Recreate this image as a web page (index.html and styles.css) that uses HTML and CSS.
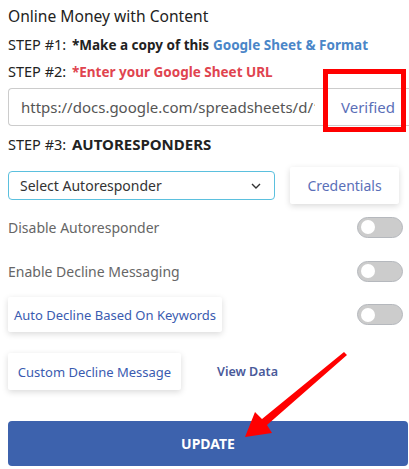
FILE: index.html
```html
<!DOCTYPE html>
<html lang="en">
<head>
    <meta charset="UTF-8">
    <title>Autoresponder Settings</title>
    <link rel="stylesheet" href="styles.css">
</head>
<body>
    <div class="panel">
        <h3 class="title">Online Money with Content</h3>

        <div class="step">STEP #1: <b>*Make a copy of this</b> <a class="sheet-link" href="#">Google Sheet &amp; Format</a></div>
        <div class="step">STEP #2: <b class="warn">*Enter your Google Sheet URL</b></div>

        <div class="url-group">
            <input type="text" class="url-input" value="https://docs.google.com/spreadsheets/d/1AbCdEfGh">
            <span class="addon">Verified</span>
        </div>

        <div class="step step3">STEP #3: <b>AUTORESPONDERS</b></div>

        <div class="row select-row">
            <div class="select">
                <span>Select Autoresponder</span>
                <svg class="chevron" width="10" height="6" viewBox="0 0 10 6"><path d="M1 1l4 4 4-4" fill="none" stroke="#333" stroke-width="1.4"/></svg>
            </div>
            <button class="card-btn cred">Credentials</button>
        </div>

        <div class="row toggle-row">
            <span class="label">Disable Autoresponder</span>
            <span class="switch"><span class="knob"></span></span>
        </div>
        <div class="row toggle-row">
            <span class="label">Enable Decline Messaging</span>
            <span class="switch"><span class="knob"></span></span>
        </div>
        <div class="row toggle-row kw-row">
            <button class="card-btn kw">Auto Decline Based On Keywords</button>
            <span class="switch"><span class="knob"></span></span>
        </div>

        <div class="row custom-row">
            <button class="card-btn custom">Custom Decline Message</button>
            <a class="view-data" href="#">View Data</a>
        </div>

        <button class="update">UPDATE</button>
    </div>

    <!-- annotation overlay -->
    <svg class="marks" width="409" height="469" viewBox="0 0 409 469">
        <rect x="325.5" y="71.5" width="78" height="58" fill="none" stroke="#ff0000" stroke-width="5"/>
        <polygon points="344,352 347,355 267,425 272,433 245,437 255,412 262,419" fill="#ff0000"/>
    </svg>
</body>
</html>
```

FILE: styles.css
```css
body {
    margin: 0;
    font-family: "Noto Sans", "Open Sans", sans-serif;
    background-color: #ffffff;
    color: #222222;
    width: 409px;
    height: 469px;
    overflow: hidden;
    position: relative;
}
.panel {
    padding: 0 0 0 8px;
}
.title {
    font-size: 15.6px;
    font-weight: normal;
    line-height: 20px;
    margin: 6px 0 8px 0;
    color: #222;
}
.step {
    font-size: 14.5px;
    line-height: 20px;
    margin-bottom: 6px;
    color: #222;
}
.step b {
    font-size: 13.5px;
    margin-left: 2px;
}
.sheet-link {
    color: #4a86c8;
    font-weight: bold;
    font-size: 13.5px;
    text-decoration: none;
}
.warn {
    color: #e0444f;
}
.url-group {
    display: flex;
    height: 38px;
    margin-top: 0;
    width: 420px;
}
.url-input {
    flex: 0 0 319px;
    box-sizing: border-box;
    border: 1px solid #cccccc;
    border-right: none;
    border-radius: 4px 0 0 4px;
    padding: 0 12px;
    font-family: inherit;
    font-size: 15px;
    color: #555;
    height: 38px;
}
.addon {
    flex: 1;
    border: 1px solid #cccccc;
    border-left: 1px solid #e8e8e8;
    display: flex;
    align-items: center;
    padding-left: 13px;
    font-size: 15px;
    color: #5a6fb8;
    box-sizing: border-box;
}
.step3 {
    margin-top: 8px;
}
.step3 b {
    font-size: 15px;
}
.row {
    display: flex;
    align-items: center;
}
.select-row {
    margin-top: 13px;
    height: 37px;
}
.select {
    width: 267px;
    height: 29px;
    box-sizing: border-box;
    border: 1px solid #5bc0de;
    border-radius: 4px;
    display: flex;
    align-items: center;
    justify-content: space-between;
    padding: 0 13px 0 11px;
    font-size: 14px;
    color: #333;
}
.card-btn {
    background: #ffffff;
    border: none;
    border-radius: 2px;
    box-shadow: 0 2px 6px rgba(0, 0, 0, 0.15);
    font-family: inherit;
    white-space: nowrap;
    padding: 0;
    cursor: pointer;
}
.cred {
    margin-left: 15px;
    width: 109px;
    height: 37px;
    font-size: 14px;
    color: #5a6fb8;
}
.toggle-row {
    justify-content: space-between;
    padding-right: 6px;
    height: 22px;
    margin-top: 12px;
}
.toggle-row + .toggle-row {
    margin-top: 22px;
}
.label {
    font-size: 14px;
    color: #666;
}
.switch {
    width: 46px;
    height: 21px;
    box-sizing: border-box;
    background: #cccccc;
    border: 1px solid #b5b8bd;
    border-radius: 11px;
    display: flex;
    align-items: center;
    padding-left: 3px;
}
.knob {
    width: 14px;
    height: 14px;
    border-radius: 50%;
    background: #ffffff;
}
.toggle-row.kw-row {
    height: 35px;
    margin-top: 15px;
}
.kw {
    width: 214px;
    height: 35px;
    font-size: 13px;
    color: #3a5bb0;
}
.custom-row {
    margin-top: 21px;
    height: 37px;
}
.custom {
    width: 173px;
    height: 37px;
    font-size: 13px;
    color: #3a5bb0;
}
.view-data {
    margin-left: 36px;
    font-size: 12.5px;
    font-weight: 600;
    color: #4a5a9a;
    text-decoration: none;
}
.update {
    margin-top: 31px;
    width: 400px;
    height: 45px;
    background-color: #3d62ad;
    color: #ffffff;
    border: none;
    border-radius: 4px;
    font-family: inherit;
    font-size: 14px;
    font-weight: bold;
    cursor: pointer;
}
.marks {
    position: absolute;
    top: 0;
    left: 0;
    pointer-events: none;
}
```
